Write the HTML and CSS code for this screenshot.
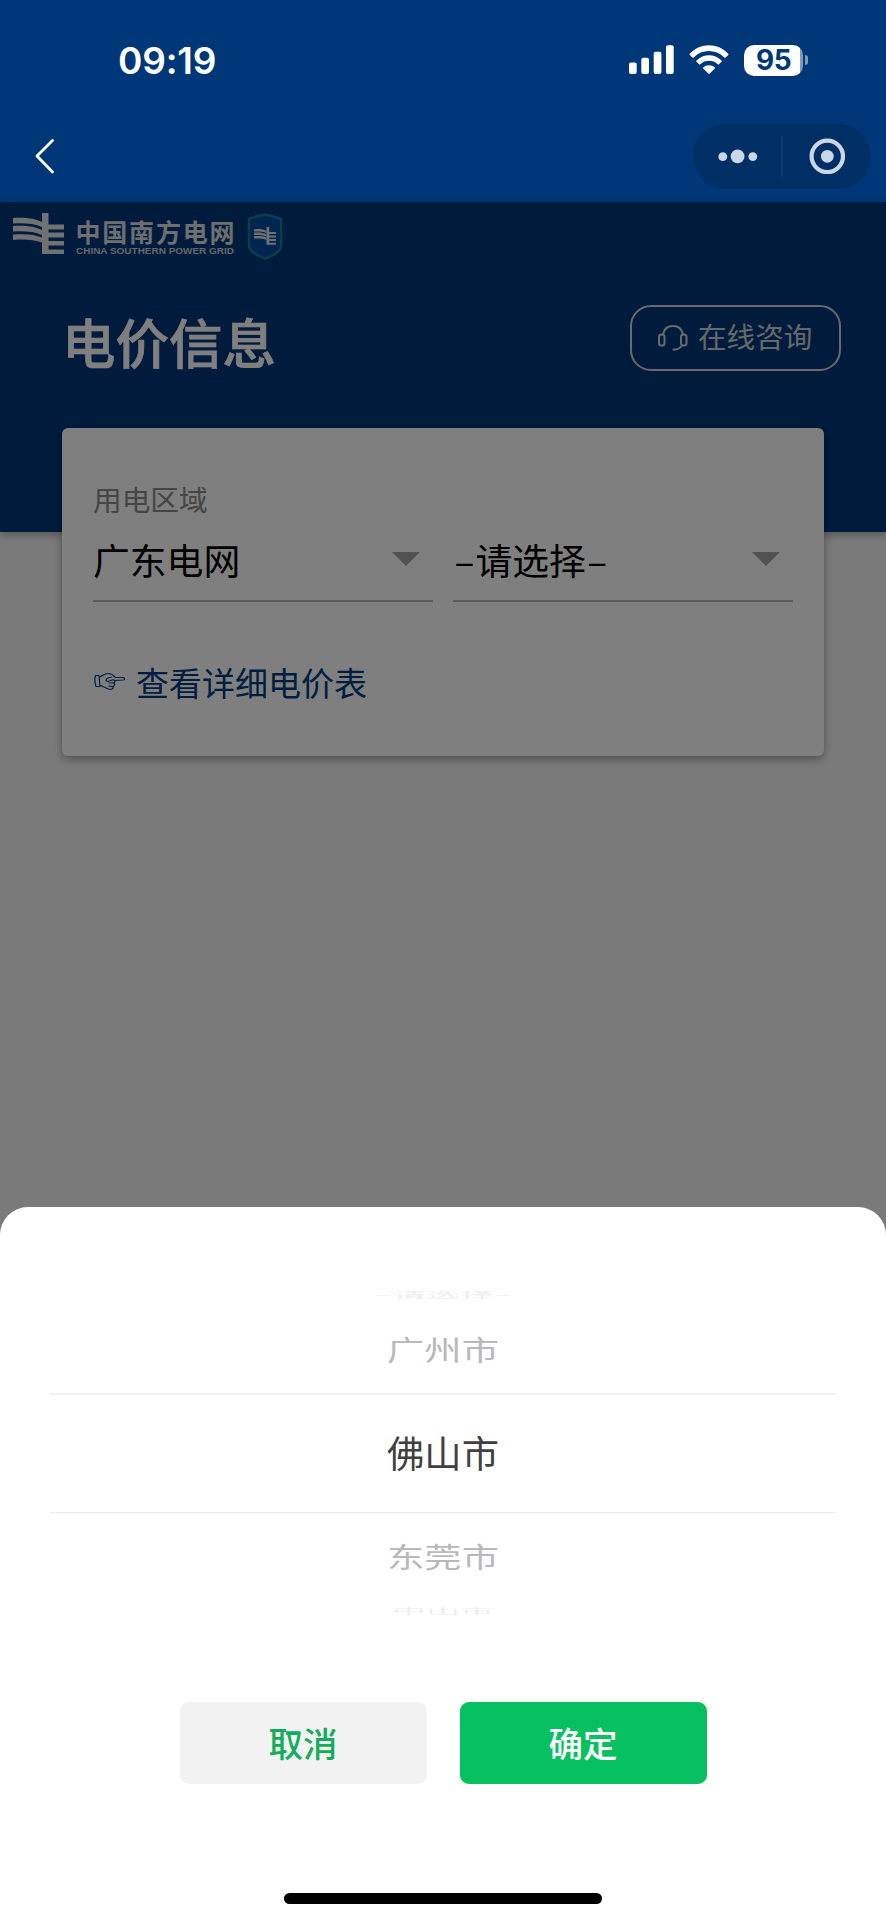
FILE: index.html
```html
<!DOCTYPE html>
<html lang="zh-CN">
    <head>
        <meta charset="UTF-8">
        <meta name="viewport" content="width=device-width, initial-scale=1">
        <title>电价信息</title>
        <link rel="stylesheet" href="styles.css">
    </head>
    <body>
        <header class="topbar">
            <div class="status">
                <span class="time">09:19</span>
                <div class="status-icons">
                    <svg class="signal" width="45" height="30" viewBox="0 0 45 30" fill="#fff">
                        <rect x="0" y="17.5" width="7.7" height="11.5" rx="2"/>
                        <rect x="12.3" y="12.7" width="7.7" height="16.3" rx="2"/>
                        <rect x="24.7" y="6.7" width="7.7" height="22.3" rx="2"/>
                        <rect x="37" y="0.3" width="7.7" height="28.7" rx="2"/>
                    </svg>
                    <svg class="wifi" width="40" height="30" viewBox="0 0 40 30" fill="#fff">
                        <path d="M0.8 8.7C11.5-2.6 28.5-2.6 39.2 8.7Q39.8 9.4 39.2 10L36.6 12.5Q36 13 35.3 12.4C26.5 4 13.5 4 4.7 12.4Q4 13 3.4 12.5L0.8 10Q0.2 9.4 0.8 8.7Z"/>
                        <path d="M7.5 15.6C14.5 8.6 25.5 8.6 32.5 15.6Q33.1 16.2 32.5 16.8L30 19.2Q29.4 19.8 28.7 19.2C23.7 14.6 16.3 14.6 11.3 19.2Q10.6 19.8 10 19.2L7.5 16.8Q6.9 16.2 7.5 15.6Z"/>
                        <path d="M14.2 22.4C17.4 19.6 22.6 19.6 25.8 22.4Q26.5 23 25.8 23.6L20.7 28.5Q20 29.1 19.3 28.5L14.2 23.6Q13.5 23 14.2 22.4Z"/>
                    </svg>
                    <div class="battery"><span>95</span></div>
                    <i class="battery-cap"></i>
                </div>
            </div>
            <nav class="nav">
                <svg class="back" width="22" height="38" viewBox="0 0 22 38" fill="none" stroke="#fff" stroke-width="2.8" stroke-linecap="round" stroke-linejoin="round">
                    <path d="M18.5 3.5L3 19L18.5 35"/>
                </svg>
                <div class="capsule">
                    <svg width="178" height="65" viewBox="0 0 178 65" fill="#ccd7e5">
                        <circle cx="29.8" cy="32.6" r="4.4"/>
                        <circle cx="44.6" cy="32.3" r="6.9"/>
                        <circle cx="59.8" cy="32.6" r="4.4"/>
                        <path d="M88.2 12h1.4v41h-1.4z" fill="#1a4273"/>
                        <circle cx="134.3" cy="32.3" r="15.7" fill="none" stroke="#ccd7e5" stroke-width="4.2"/>
                        <circle cx="134.3" cy="32.3" r="6.4"/>
                    </svg>
                </div>
            </nav>
        </header>

        <main class="page">
            <section class="hero">
                <svg class="logo" width="275" height="50" viewBox="0 0 275 50">
                    <g id="grid-mark" fill="#e0e3e6">
                        <path d="M0 5C13 4 22 5.500 29 9V14C21 10.500 12 10 0 10.500Z"/>
                        <path d="M0 13C13 12 22 13.500 29 17V22C21 18.500 12 18 0 18.500Z"/>
                        <path d="M0 21.500C13 20.500 22 21.500 29 24.500V29.500C21 27 12 26 0 27Z"/>
                        <path d="M29 0H35.500V11.500H51V16.500H35.500V19.500H51V24.500H35.500V28H51V32.500H35.500V36.500H51V41H29Z"/>
                    </g>
                    <text class="logo-cn" x="62.500" y="29" textLength="159">中国南方电网</text>
                    <text class="logo-en" x="63" y="41.300" textLength="158" lengthAdjust="spacingAndGlyphs">CHINA SOUTHERN POWER GRID</text>
                    <path d="M252.300 1.500C259 2.500 263 4 268 6V32C268 39 260 42.500 252.300 45.500C244.500 42.500 236 39 236 32V6C241 4 245 2.500 252.300 1.500Z" fill="#004a9c" stroke="#0e8099" stroke-width="2.500"/>
                    <use href="#grid-mark" transform="translate(241 14) scale(.43)"/>
                </svg>
                <div class="hero-row">
                    <h1>电价信息</h1>
                    <a class="consult">
                        <svg width="30" height="26" viewBox="0 0 30 26" fill="none" stroke="#d0d5db" stroke-width="2">
                            <path d="M5 9.500C6 4 10 1 15 1S24 4 25 9.500"/>
                            <rect x="1" y="9.500" width="5.500" height="11" rx="2.500"/>
                            <rect x="23" y="9.500" width="5.500" height="11" rx="2.500"/>
                            <path d="M24 20.500C22 23.500 19 24.800 14.500 24.800"/>
                        </svg>
                        <span>在线咨询</span>
                    </a>
                </div>
            </section>
            <section class="card">
                <label class="label">用电区域</label>
                <div class="selects">
                    <div class="select">广东电网</div>
                    <div class="select"><span><span class="dash">–</span>请选择<span class="dash">–</span></span></div>
                </div>
                <a class="detail">
                    <svg width="32" height="20" viewBox="0 0 32 20" fill="none" stroke="#003b80" stroke-width="1.200" stroke-linejoin="round">
                        <path d="M1.500 3.500H5L6 14.500H2Q0 9 1.500 3.500Z"/>
                        <path d="M5.500 5C9 4 10 1.500 14 1.500C18 1.500 20 4 21.500 5.500H29.500Q31.500 6.500 29.500 8L20.500 8.500"/>
                        <path d="M6 13.500C9 13.500 12 17 16 17.500C19 17 19.500 16 19 14.500C21 13.500 21 12 20 11C22 9.500 20.500 7.500 18 8L13.500 9.500C11 9 12 7 14 6L18 5"/>
                        <path d="M14.500 11L20 11M14.500 14L19 14.500"/>
                    </svg>
                    查看详细电价表
                </a>
            </section>
            <div class="mask"></div>
        </main>

        <div class="sheet">
            <div class="picker">
                <div class="item far far-top"><span>–请选择–</span></div>
                <div class="item near near-top">广州市</div>
                <div class="item current">佛山市</div>
                <div class="item near near-bottom">东莞市</div>
                <div class="item far far-bottom"><span>中山市</span></div>
            </div>
            <div class="actions">
                <button class="btn cancel">取消</button>
                <button class="btn confirm">确定</button>
            </div>
            <div class="home-indicator"></div>
        </div>
    </body>
</html>
```

FILE: styles.css
```css
* {
    box-sizing: border-box;
}

body {
    margin: 0;
    width: 886px;
    height: 1920px;
    overflow: hidden;
    position: relative;
    font-family: "Noto Sans CJK SC", sans-serif;
    background: #f5f5f5;
}

svg {
    display: block;
    flex: none;
}

.topbar {
    height: 202px;
    background: #003779;
}

.status {
    height: 120px;
    padding: 0 78px 0 118px;
    display: flex;
    align-items: center;
    justify-content: space-between;
}

.time {
    font: 600 37px/1 Inter, sans-serif;
    letter-spacing: -0.2px;
    color: #fff;
}

.status-icons {
    display: flex;
    align-items: center;
}

.wifi {
    margin-left: 15px;
}

.battery {
    width: 59px;
    height: 31px;
    margin-left: 15px;
    border-radius: 10px;
    background: linear-gradient(to right, #fff 56px, #7f9bbc 56px);
    color: #003779;
    font: 700 28px/31px Inter, sans-serif;
    letter-spacing: -0.5px;
    text-align: center;
}

.battery-cap {
    width: 3px;
    height: 10px;
    margin-left: 2px;
    border-radius: 0 3px 3px 0;
    background: #7f9bbc;
}

.nav {
    height: 72px;
    padding: 0 15px 0 34px;
    display: flex;
    align-items: center;
    justify-content: space-between;
}

.capsule {
    width: 178px;
    height: 65px;
    border-radius: 33px;
    background: #002f66;
}

.page {
    height: 1718px;
    position: relative;
}

.hero {
    height: 330px;
    padding: 11px 45px 0 13px;
    background: #003779;
    box-shadow: 0 3px 8px rgba(0, 0, 0, 0.3);
}

.logo-cn {
    font: 700 25px "Noto Sans CJK SC", sans-serif;
    fill: #dcdfe3;
}

.logo-en {
    font: 700 9px "Liberation Sans", sans-serif;
    fill: #c8ced6;
}

.hero-row {
    margin-top: 42px;
    padding-left: 49px;
    display: flex;
    justify-content: space-between;
}

h1 {
    margin: 0;
    font-size: 53.5px;
    font-weight: 500;
    line-height: 71px;
    color: #fff;
    -webkit-text-stroke: 0.7px #fff;
}

.consult {
    width: 211px;
    height: 66px;
    padding-left: 26px;
    border: 2px solid #d0d5db;
    border-radius: 21px;
    display: flex;
    align-items: center;
    gap: 10px;
    font-size: 28.6px;
    line-height: 30px;
    color: #cdd2d9;
}

.consult span {
    padding-bottom: 4px;
}

.card {
    position: relative;
    width: 762px;
    height: 328px;
    margin: -104px 0 0 62px;
    padding: 50px 31px 0;
    border-radius: 6px;
    background: #fff;
    box-shadow: 0 3px 10px rgba(0, 0, 0, 0.35);
}

.label {
    display: block;
    font-size: 28.7px;
    line-height: 42px;
    color: #8a8a8a;
}

.selects {
    display: flex;
    gap: 20px;
}

.select {
    flex: 1;
    height: 82px;
    padding: 0 13px 0 0;
    border-bottom: 2px solid #b8b8b8;
    display: flex;
    justify-content: space-between;
    font-size: 36.8px;
    font-weight: 400;
    line-height: 79px;
    color: #000;
}

.select::after {
    content: "";
    align-self: flex-start;
    margin-top: 32px;
    border: 14px solid transparent;
    border-top-color: #a2a2a2;
    border-bottom: 0;
}

.dash {
    display: inline-block;
    width: 22.5px;
    text-align: center;
}

.detail {
    margin-top: 56px;
    padding-left: 1px;
    display: flex;
    align-items: center;
    gap: 10px;
    font-size: 33px;
    line-height: 48px;
    color: #003b80;
}

.mask {
    position: absolute;
    inset: 0;
    background: rgba(0, 0, 0, 0.5);
}

.sheet {
    position: absolute;
    left: 0;
    right: 0;
    bottom: 0;
    height: 713px;
    border-radius: 28px 28px 0 0;
    background: #fff;
    display: flex;
    flex-direction: column;
    align-items: center;
}

.picker {
    width: 786px;
    height: 333px;
    margin-top: 82px;
    text-align: center;
    font-size: 37.3px;
    color: #404040;
}

/* outer rows are turned almost edge-on by the wheel */
.far {
    height: 12px;
    display: flex;
    align-items: center;
    justify-content: center;
    font-size: 34px;
    line-height: 40px;
    color: #eee;
}

.far span {
    transform: scaleY(0.22);
}

.near {
    height: 92px;
    color: #b9b9b9;
    transform: scaleY(0.76);
}

.near-top {
    line-height: 99px;
}

.near-bottom {
    line-height: 84px;
}

.current {
    height: 120px;
    line-height: 115px;
    border-top: 2px solid #f1f1f1;
    border-bottom: 1px solid #ececec;
}

.actions {
    margin-top: 80px;
    display: flex;
    gap: 33px;
}

.btn {
    width: 247px;
    height: 82px;
    padding: 0 0 1px;
    border: 0;
    border-radius: 9px;
    font-family: inherit;
    font-size: 34.5px;
    font-weight: 500;
    line-height: 1;
}

.cancel {
    background: #f2f2f2;
    color: #12ad5c;
}

.confirm {
    background: #07c160;
    color: #fff;
}

.home-indicator {
    width: 318px;
    height: 11px;
    margin: auto 0 16px;
    border-radius: 6px;
    background: #000;
}
```
